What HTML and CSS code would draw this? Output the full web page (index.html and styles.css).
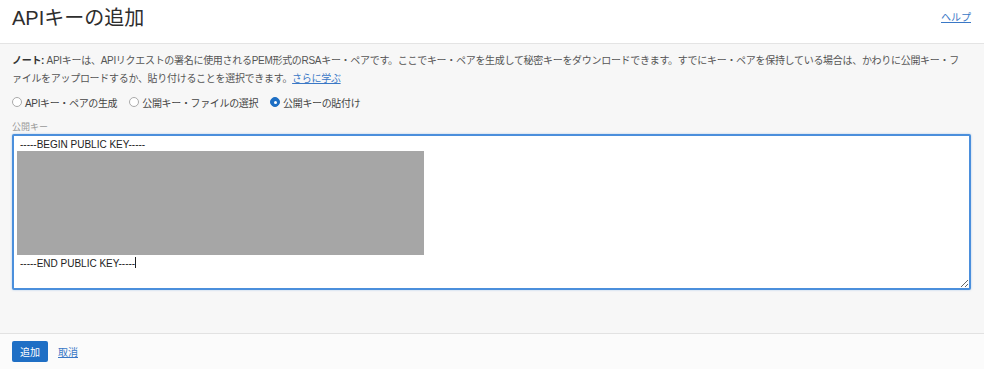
FILE: index.html
```html
<!DOCTYPE html>
<html lang="ja">
<head>
  <meta charset="UTF-8" />
  <title>APIキーの追加</title>
  <link rel="stylesheet" href="styles.css">
</head>
<body>
  <div class="page">
    <header class="header">
      <h1>APIキーの追加</h1>
      <a href="#" class="help">ヘルプ</a>
    </header>

    <main class="content">
      <p class="note"><b>ノート:</b> APIキーは、APIリクエストの署名に使用されるPEM形式のRSAキー・ペアです。ここでキー・ペアを生成して秘密キーをダウンロードできます。すでにキー・ペアを保持している場合は、かわりに公開キー・フ<br>ァイルをアップロードするか、貼り付けることを選択できます。<a href="#">さらに学ぶ</a></p>

      <div class="options">
        <label class="option"><span class="radio"></span>APIキー・ペアの生成</label>
        <label class="option"><span class="radio"></span>公開キー・ファイルの選択</label>
        <label class="option"><span class="radio checked"></span>公開キーの貼付け</label>
      </div>

      <div class="field-label">公開キー</div>
      <div class="keybox">
        <div class="keyline first">-----BEGIN PUBLIC KEY-----</div>
        <div class="redacted"></div>
        <div class="keyline last">-----END PUBLIC KEY-----<span class="caret"></span></div>
      </div>
    </main>

    <footer class="footer">
      <button class="btn-primary">追加</button>
      <a href="#" class="cancel">取消</a>
    </footer>
  </div>
</body>
</html>
```

FILE: styles.css
```css
body {
  margin: 0;
  font-family: "Liberation Sans", "Noto Sans CJK JP", sans-serif;
  color: #333;
}

.page {
  height: 100vh;
  display: flex;
  flex-direction: column;
}

.header {
  height: 43px;
  background: #fff;
  border-bottom: 1px solid #e4e4e4;
  display: flex;
  justify-content: space-between;
  align-items: flex-start;
  padding: 0 13px 0 12px;
}

h1 {
  margin: 6px 0 0;
  font-size: 20px;
  line-height: 24px;
  font-weight: normal;
  color: #2e2e2e;
}

.help {
  margin-top: 11px;
  font-size: 10px;
  line-height: 14px;
  color: #3a78c6;
}

.content {
  flex: 1;
  background: #f7f7f7;
  padding: 8px 6px 0 12px;
}

.note {
  margin: 0;
  font-size: 10px;
  line-height: 18px;
  letter-spacing: -0.3px;
  color: #555;
  white-space: nowrap;
}

.note b {
  color: #333;
}

.note a {
  color: #3a78c6;
}

.options {
  display: flex;
  gap: 12px;
  margin-top: 5px;
  height: 18px;
  align-items: center;
}

.option {
  display: flex;
  align-items: center;
  gap: 3px;
  font-size: 10px;
  letter-spacing: -0.35px;
  color: #444;
}

.radio {
  width: 8px;
  height: 8px;
  border: 1px solid #aaa;
  border-radius: 50%;
  background: #fff;
  position: relative;
}

.radio.checked {
  border-color: #1e6fc4;
  background: #1e6fc4;
}

.radio.checked::after {
  content: "";
  position: absolute;
  left: 2.5px;
  top: 2.5px;
  width: 3px;
  height: 3px;
  border-radius: 50%;
  background: #fff;
}

.field-label {
  margin-top: 9px;
  font-size: 9px;
  line-height: 14px;
  color: #999;
}

.keybox {
  width: 959px;
  height: 156px;
  box-sizing: border-box;
  background: #fff;
  border: 2px solid #4b8fdc;
  border-radius: 2px;
  box-shadow: 0 0 2px rgba(75, 143, 220, 0.5);
  padding: 1px 3px;
  overflow: auto;
  resize: vertical;
}

.keyline {
  font-size: 10px;
  line-height: 14px;
  padding-left: 3px;
  color: #222;
}

.keyline.first {
  padding-top: 2px;
  line-height: 12px;
}

.keyline.last {
  margin-top: 2px;
}

.redacted {
  width: 407px;
  height: 104px;
  background: #a6a6a6;
}

.caret {
  display: inline-block;
  width: 1px;
  height: 11px;
  background: #222;
  vertical-align: -1px;
}

.footer {
  height: 35px;
  border-top: 1px solid #e2e2e2;
  background: #fbfbfb;
  display: flex;
  align-items: center;
  gap: 10px;
  padding: 0 12px;
}

.btn-primary {
  height: 21px;
  width: 36px;
  padding: 0;
  border: none;
  border-radius: 2px;
  background: #1f6fc5;
  color: #fff;
  font-family: inherit;
  font-size: 10px;
}

.cancel {
  font-size: 10px;
  color: #3a78c6;
}
```
